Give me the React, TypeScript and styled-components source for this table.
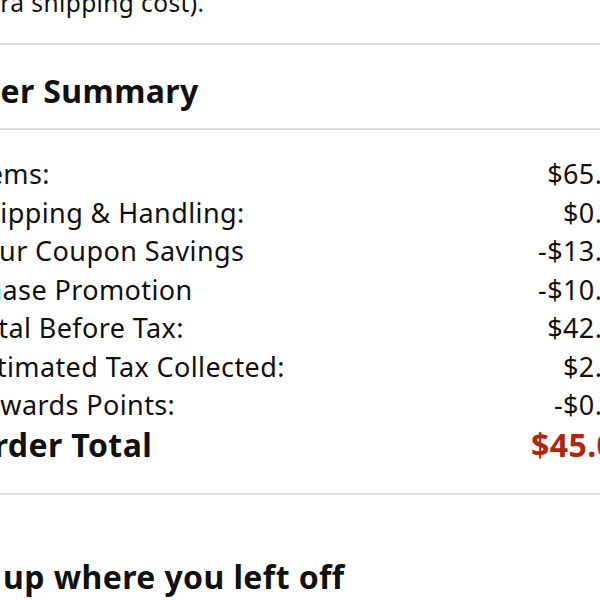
import React from 'react';
import styled, { createGlobalStyle } from 'styled-components';

const GlobalStyle = createGlobalStyle`
  body {
    margin: 0;
    overflow: hidden;
    background: #fff;
    font-family: 'Noto Sans', 'Open Sans', sans-serif;
    color: #111;
  }
`;

const Page = styled.div`
  width: 666px;
  margin: -54px 0 0 -32px;
  display: flex;
  flex-direction: column;
`;

const Note = styled.p`
  margin: 0 0 0 -4px;
  font-size: 24.5px;
  line-height: 38px;
  letter-spacing: 0.4px;
`;

const Divider = styled.hr<{ $top: number }>`
  border: 0;
  height: 2px;
  background: #dddddd;
  margin: ${(p) => p.$top}px 0 0;
`;

const Heading = styled.h2<{ $shift: number; $top: number; $bottom: number }>`
  margin: 0 0 0 ${(p) => p.$shift}px;
  padding: ${(p) => p.$top}px 0 ${(p) => p.$bottom}px;
  font-size: 32px;
  line-height: 40px;
  font-weight: 700;
  letter-spacing: 0.4px;
`;

const Rows = styled.div`
  display: flex;
  flex-direction: column;
  padding-top: 25px;
`;

const Row = styled.div<{ $total?: boolean }>`
  display: flex;
  justify-content: space-between;
  font-size: ${(p) => (p.$total ? 32 : 27)}px;
  line-height: ${(p) => (p.$total ? 40 : 38.5)}px;
  font-weight: ${(p) => (p.$total ? 700 : 400)};
  letter-spacing: 0.4px;
`;

const Amount = styled.span<{ $total?: boolean }>`
  color: ${(p) => (p.$total ? '#b12704' : '#111')};
`;

const lines = [
  ['Items:', '$65.99'],
  ['Shipping & Handling:', '$0.00'],
  ['Your Coupon Savings', '-$13.20'],
  ['Chase Promotion', '-$10.00'],
  ['Total Before Tax:', '$42.79'],
  ['Estimated Tax Collected:', '$2.78'],
  ['Rewards Points:', '-$0.50'],
];

export default function App() {
  return (
    <>
      <GlobalStyle />
      <Page>
        <Note>
          Items may arrive in separate boxes (no
          <br />
          extra shipping cost).
        </Note>
        <Divider $top={21} />
        <Heading $shift={-28} $top={26} $bottom={17}>
          Order Summary
        </Heading>
        <Divider $top={0} />
        <Rows>
          {lines.map(([label, value]) => (
            <Row key={label}>
              <span>{label}</span>
              <Amount>{value}</Amount>
            </Row>
          ))}
          <Row $total>
            <span>Order Total</span>
            <Amount $total>$45.07</Amount>
          </Row>
        </Rows>
        <Divider $top={28} />
        <Heading $shift={-41} $top={62} $bottom={0}>
          Pick up where you left off
        </Heading>
      </Page>
    </>
  );
}
